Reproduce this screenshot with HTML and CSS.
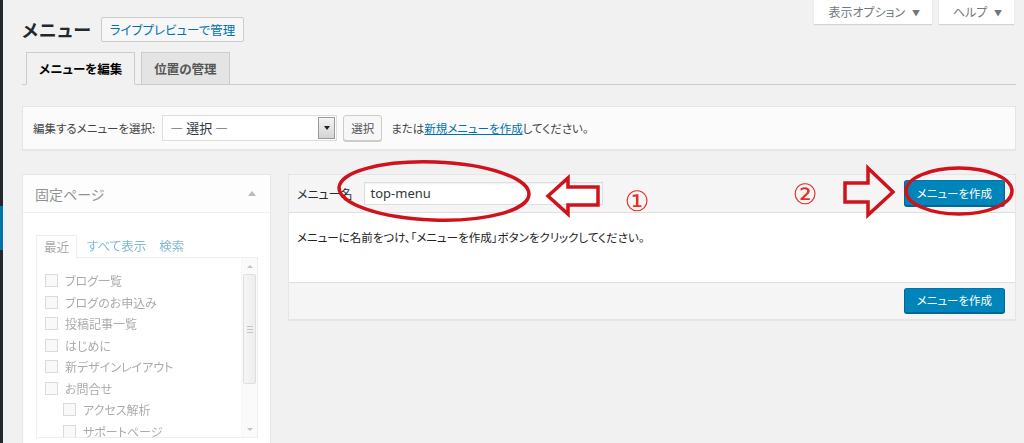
FILE: index.html
```html
<!DOCTYPE html>
<html lang="ja">
<head>
<meta charset="utf-8">
<title>メニュー</title>
<link rel="stylesheet" href="styles.css">
</head>
<body>
<div class="edge"><span class="edge-current"></span></div>
<main class="wrap">
  <div class="top">
    <div class="title-row">
      <h1>メニュー</h1>
      <a class="title-action">ライブプレビューで管理</a>
    </div>
    <div class="meta-links">
      <span class="meta-link">表示オプション <span class="tri">▼</span></span>
      <span class="meta-link">ヘルプ <span class="tri">▼</span></span>
    </div>
  </div>

  <nav class="tabs">
    <a class="tab active">メニューを編集</a>
    <a class="tab">位置の管理</a>
  </nav>

  <div class="manage">
    <span class="manage-label">編集するメニューを選択:</span>
    <div class="select"><span class="select-text">— 選択 —</span><span class="select-arrow"><span class="down"></span></span></div>
    <span class="btn">選択</span>
    <span class="manage-text">または<a class="link">新規メニューを作成</a>してください。</span>
  </div>

  <div class="columns">
    <section class="side-panel">
      <div class="side-head"><span class="faded">固定ページ</span><span class="up faded"></span></div>
      <div class="side-body faded">
        <div class="inner-tabs">
          <span class="inner-tab active">最近</span>
          <span class="inner-tab">すべて表示</span>
          <span class="inner-tab">検索</span>
        </div>
        <div class="list-box">
          <ul class="list">
            <li><span class="cb"></span>ブログ一覧</li>
            <li><span class="cb"></span>ブログのお申込み</li>
            <li><span class="cb"></span>投稿記事一覧</li>
            <li><span class="cb"></span>はじめに</li>
            <li><span class="cb"></span>新デザインレイアウト</li>
            <li><span class="cb"></span>お問合せ</li>
            <li class="child"><span class="cb"></span>アクセス解析</li>
            <li class="child"><span class="cb"></span>サポートページ</li>
          </ul>
          <div class="scrollbar">
            <span class="sb-btn"><span class="sb-up"></span></span>
            <span class="sb-thumb"><span class="grip"></span></span>
            <span class="sb-track"></span>
            <span class="sb-btn"><span class="sb-down"></span></span>
          </div>
        </div>
      </div>
    </section>

    <section class="menu-panel">
      <div class="menu-head">
        <label class="menu-name">メニュー名<span class="input">top-menu</span></label>
        <span class="btn-primary">メニューを作成</span>
      </div>
      <div class="menu-body">メニューに名前をつけ、「メニューを作成」ボタンをクリックしてください。</div>
      <div class="menu-foot"><span class="btn-primary small">メニューを作成</span></div>
    </section>
  </div>
</main>

<svg class="annotations" width="1024" height="443" viewBox="0 0 1024 443">
  <g fill="none" stroke="#d0121b" stroke-width="3.5" stroke-linejoin="miter">
    <ellipse cx="434" cy="191" rx="95" ry="29" transform="rotate(2 434 191)"/>
    <polygon points="548,196 568,178 568,187 598,187 598,205 568,205 568,214"/>
    <polygon points="845,183 868,183 868,168 893,192 868,215 868,202 845,202"/>
    <ellipse cx="959" cy="191" rx="53" ry="23"/>
  </g>
  <text x="637" y="211" class="num">①</text>
  <text x="805" y="204" class="num">②</text>
</svg>
</body>
</html>
```

FILE: styles.css
```css
* { box-sizing: border-box; }
html, body { margin: 0; height: 100%; }
body {
  background: #f1f1f1;
  font-family: "Noto Sans CJK JP", "Noto Sans", sans-serif;
  font-feature-settings: "palt";
  font-size: 12px;
  color: #444;
  display: flex;
  overflow: hidden;
}
a { text-decoration: none; }

.edge { width: 3px; flex: none; background: #23282d; }
.edge-current { display: block; margin-top: 206px; height: 44px; background: #0073aa; }

.wrap { flex: 1; padding: 0 8px 0 19px; }

.top { display: flex; justify-content: space-between; align-items: flex-start; }
.title-row { display: flex; align-items: center; gap: 9px; padding-top: 17px; }
h1 { margin: 0; font-size: 18px; font-weight: 700; color: #23282d; line-height: 25px; letter-spacing: 0.8px; }
.title-action {
  display: block; height: 25px; line-height: 23px; padding: 0 8px;
  border: 1px solid #ccc; background: #f7f7f7; color: #0073aa; font-size: 12.5px;
  border-radius: 2px;
}

.meta-links { display: flex; gap: 7px; margin-right: 2px; }
.meta-link {
  display: block; height: 24px; line-height: 24px; padding: 0 12px 0 14px;
  background: #fff; color: #72777c; font-size: 12px;
  box-shadow: 0 1px 1px rgba(0,0,0,.12);
}
.tri { font-size: 8px; margin-left: 4px; vertical-align: 1px; }

.tabs {
  display: flex; gap: 6px; margin-top: 10px; padding-left: 4px;
  border-bottom: 1px solid #ccc;
}
.tab {
  display: block; height: 33px; line-height: 32px; padding: 0 12px;
  border: 1px solid #ccc; margin-bottom: -1px;
  background: #e4e4e4; color: #555; font-size: 12.5px; font-weight: 700;
}
.tab.active { background: #f1f1f1; color: #000; border-bottom-color: #f1f1f1; }

.manage {
  display: flex; align-items: center; margin-top: 21px;
  background: #fbfbfb; border: 1px solid #e5e5e5; padding: 8px 10px;
  box-shadow: 0 1px 1px rgba(0,0,0,.04); color: #444; font-size: 11.5px;
}
.select {
  display: flex; width: 175px; height: 26px; margin-left: 7px;
  background: #fff; border: 1px solid #ddd; align-items: stretch;
}
.select-text { flex: 1; padding-left: 7px; line-height: 24px; font-size: 13px; color: #32373c; }
.select-arrow {
  width: 17px; margin: 1px; border: 1px solid #9a9a9a;
  background: linear-gradient(#f4f4f4, #d4d4d4);
  display: flex; align-items: center; justify-content: center;
}
.down { width: 0; height: 0; border-left: 3.5px solid transparent; border-right: 3.5px solid transparent; border-top: 4px solid #222; }
.btn {
  display: block; height: 26px; line-height: 24px; padding: 0 7px; margin-left: 6px;
  border: 1px solid #ccc; background: #f7f7f7; color: #555; border-radius: 3px;
  box-shadow: 0 1px 0 #ccc;
}
.manage-text { margin-left: 9px; }
.link { color: #0073aa; text-decoration: underline; }

.columns { display: flex; gap: 17px; margin-top: 24px; align-items: flex-start; }

.side-panel {
  width: 249px; flex: none; height: 300px;
  background: #fff; border: 1px solid #e5e5e5;
}
.faded { opacity: .5; }
.side-head {
  height: 38px; display: flex; align-items: center; justify-content: space-between;
  padding: 0 12px; border-bottom: 1px solid #eee; background: #fdfdfd;
  font-size: 14px; color: #23282d;
}
.up { width: 0; height: 0; border-left: 4px solid transparent; border-right: 4px solid transparent; border-bottom: 5px solid #777; margin-right: 2px; }
.side-body { padding: 21px 12px 0 13px; }
.inner-tabs { display: flex; align-items: flex-end; gap: 10px; height: 23px; font-size: 12.5px; }
.inner-tab { color: #0073aa; line-height: 22px; }
.inner-tab + .inner-tab + .inner-tab { margin-left: 3px; }
.inner-tab.active {
  color: #555; padding: 0 7px; border: 1px solid #ddd; border-bottom: none;
  background: #fff; height: 23px; margin-bottom: -1px; position: relative;
}
.list-box { display: flex; height: 181px; border: 1px solid #ddd; background: #fff; }
.list { list-style: none; margin: 0; padding: 12px 0 0 8px; flex: 1; overflow: hidden; color: #555; }
.list li { display: flex; align-items: center; height: 21.5px; }
.list li.child { padding-left: 18px; }
.cb { width: 13px; height: 13px; border: 1px solid #b4b4b4; background: #f3f3f3; margin-right: 7px; flex: none; }
.scrollbar { width: 16px; display: flex; flex-direction: column; background: #f4f4f4; border-left: 1px solid #eee; }
.sb-btn { height: 16px; display: flex; align-items: center; justify-content: center; }
.sb-up { border-left: 3px solid transparent; border-right: 3px solid transparent; border-bottom: 3px solid #888; }
.sb-down { border-left: 3px solid transparent; border-right: 3px solid transparent; border-top: 3px solid #888; }
.sb-thumb {
  height: 110px; margin: 0 1px; border: 1px solid #bdbdbd; border-radius: 2px;
  background: linear-gradient(90deg, #eaeaea, #dcdcdc);
  display: flex; align-items: center; justify-content: center;
}
.grip { width: 6px; height: 7px; border-top: 1px solid #888; border-bottom: 1px solid #888; background: linear-gradient(#888, #888) center / 6px 1px no-repeat; }
.sb-track { flex: 1; }

.menu-panel {
  flex: 1; background: #fff; border: 1px solid #e5e5e5;
  box-shadow: 0 1px 1px rgba(0,0,0,.04);
}
.menu-head {
  display: flex; align-items: center; justify-content: space-between;
  background: #f5f5f5; border-bottom: 1px solid #dfdfdf; padding: 5px 10px 6px 8px;
}
.menu-name { display: flex; align-items: center; color: #23282d; }
.input {
  display: block; width: 239px; height: 23px; margin-left: 11px; padding-left: 6px;
  line-height: 21px; border: 1px solid #ddd; background: #fff; font-size: 13px; color: #32373c;
  box-shadow: inset 0 1px 2px rgba(0,0,0,.07);
  font-family: "Noto Sans", sans-serif;
}
.menu-body { padding: 15px 8px 36px; line-height: 18px; color: #222; font-size: 11.5px; }
.menu-foot {
  display: flex; justify-content: flex-end; background: #f5f5f5;
  border-top: 1px solid #dfdfdf; padding: 5px 10px 6px;
}
.btn-primary {
  display: block; height: 26px; line-height: 24px; padding: 0 12px;
  background: #0085ba; border: 1px solid; border-color: #0073aa #006799 #006799;
  box-shadow: 0 1px 0 #006799; color: #fff; border-radius: 3px; font-size: 11.5px;
}
.btn-primary.small { height: 25px; line-height: 23px; }

.annotations { position: absolute; left: 0; top: 0; pointer-events: none; }
.num { font-family: "DejaVu Sans", sans-serif; font-size: 28px; fill: #e0302a; text-anchor: middle; }
```
